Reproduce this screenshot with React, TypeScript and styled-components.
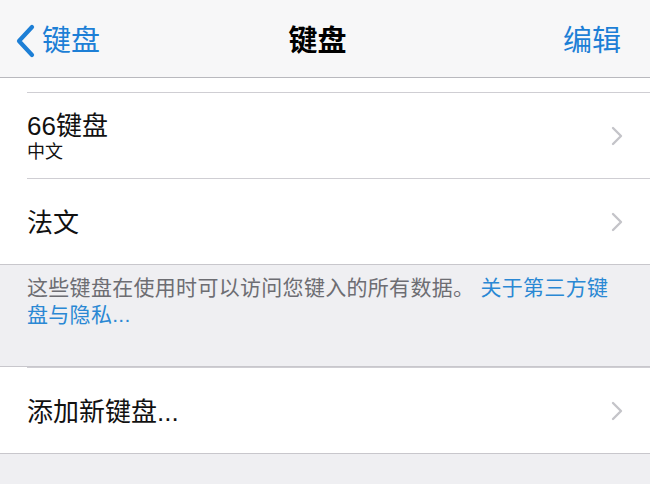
import React from "react"
import styled, { createGlobalStyle } from "styled-components"

const GlobalStyle = createGlobalStyle`
	html, body {
		margin: 0;
		padding: 0;
		background: #efeff2;
		font-family: "Liberation Sans", "Noto Sans CJK SC", sans-serif;
		-webkit-font-smoothing: antialiased;
	}
`

type Item = {
	title: string
	subtitle?: string
}

const keyboards: Item[] = [{ title: "66键盘", subtitle: "中文" }, { title: "法文" }]

const BackChevron: React.FC = () => (
	<svg width="22" height="34" viewBox="0 0 22 34" fill="none">
		<path
			d="M18 3 L5 17 L18 31"
			stroke="#1d7fd6"
			strokeWidth="4.2"
			strokeLinecap="round"
			strokeLinejoin="round"
		/>
	</svg>
)

const Disclosure: React.FC = () => (
	<svg width="12" height="20" viewBox="0 0 12 20" fill="none">
		<path
			d="M2 2 L10 10 L2 18"
			stroke="#c4c4c9"
			strokeWidth="2.4"
			strokeLinecap="round"
			strokeLinejoin="round"
		/>
	</svg>
)

const Cell: React.FC<{ item: Item }> = ({ item }) => (
	<Row>
		<RowInner>
			<Labels>
				<Title>{item.title}</Title>
				{item.subtitle && <Subtitle>{item.subtitle}</Subtitle>}
			</Labels>
			<Disclosure />
		</RowInner>
	</Row>
)

const App: React.FC = () => {
	return (
		<Page>
			<GlobalStyle />
			<NavBar>
				<BackButton>
					<BackChevron />
					<span>键盘</span>
				</BackButton>
				<NavTitle>键盘</NavTitle>
				<EditButton>编辑</EditButton>
			</NavBar>
			<Group>
				<ClippedRow />
				{keyboards.map((k) => (
					<Cell key={k.title} item={k} />
				))}
			</Group>
			<FooterNote>
				这些键盘在使用时可以访问您键入的所有数据。 <NoteLink>关于第三方键盘与隐私...</NoteLink>
			</FooterNote>
			<Group $bordered>
				<Cell item={{ title: "添加新键盘..." }} />
			</Group>
		</Page>
	)
}

const Page = styled.div`
	min-height: 100vh;
	background: #efeff2;
	display: flex;
	flex-direction: column;
`

const NavBar = styled.header`
	height: 78px;
	box-sizing: border-box;
	display: grid;
	grid-template-columns: 1fr auto 1fr;
	align-items: center;
	padding: 4px 29px 0 14px;
	background: #f7f7f8;
	border-bottom: 1px solid #b9b9be;
`

const BackButton = styled.div`
	display: flex;
	align-items: center;
	gap: 6px;
	color: #1d7fd6;
	font-size: 29px;
	line-height: 34px;
	justify-self: start;
`

const NavTitle = styled.div`
	font-size: 29px;
	font-weight: 700;
	color: #000;
	line-height: 34px;
`

const EditButton = styled.div`
	justify-self: end;
	font-size: 29px;
	color: #1d7fd6;
	line-height: 34px;
`

const Group = styled.section<{ $bordered?: boolean }>`
	background: #fff;
	border-bottom: 1px solid #c8c7cc;
	border-top: ${(p) => (p.$bordered ? "1px solid #c8c7cc" : "none")};
`

const ClippedRow = styled.div`
	height: 14px;
`

const Row = styled.div`
	padding-left: 27px;
`

const RowInner = styled.div`
	height: 85px;
	display: flex;
	align-items: center;
	justify-content: space-between;
	padding-right: 27px;
	border-top: 1px solid #cfced3;
`

const Labels = styled.div`
	display: flex;
	flex-direction: column;
	padding-top: 2px;
`

const Title = styled.div`
	font-size: 26px;
	line-height: 30px;
	color: #111;
`

const Subtitle = styled.div`
	font-size: 18px;
	line-height: 22px;
	color: #111;
`

const FooterNote = styled.p`
	margin: 0;
	height: 101px;
	box-sizing: border-box;
	padding: 9px 30px 0 27px;
	font-size: 21px;
	line-height: 27px;
	letter-spacing: 0.3px;
	color: #6d6d72;
`

const NoteLink = styled.span`
	color: #2a88d4;
`

export default App
